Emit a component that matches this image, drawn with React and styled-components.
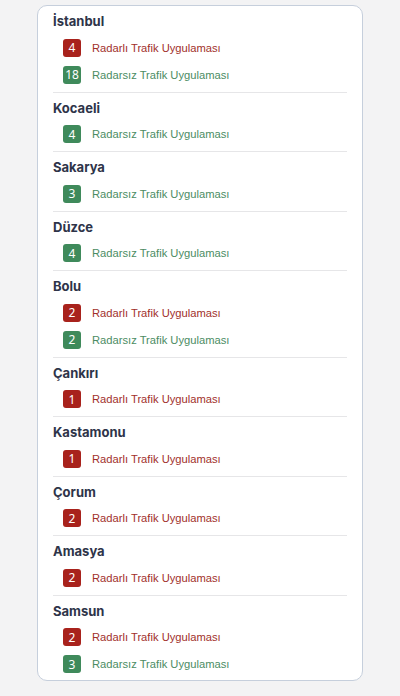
import styled, { createGlobalStyle } from "styled-components";

const cities = [
  { name: "İstanbul", items: [{ type: "radar", count: 4 }, { type: "free", count: 18 }] },
  { name: "Kocaeli", items: [{ type: "free", count: 4 }] },
  { name: "Sakarya", items: [{ type: "free", count: 3 }] },
  { name: "Düzce", items: [{ type: "free", count: 4 }] },
  { name: "Bolu", items: [{ type: "radar", count: 2 }, { type: "free", count: 2 }] },
  { name: "Çankırı", items: [{ type: "radar", count: 1 }] },
  { name: "Kastamonu", items: [{ type: "radar", count: 1 }] },
  { name: "Çorum", items: [{ type: "radar", count: 2 }] },
  { name: "Amasya", items: [{ type: "radar", count: 2 }] },
  { name: "Samsun", items: [{ type: "radar", count: 2 }, { type: "free", count: 3 }] },
];

const labels = {
  radar: "Radarlı Trafik Uygulaması",
  free: "Radarsız Trafik Uygulaması",
};

const palette = {
  radar: { badge: "#a8221c", text: "#a1302b" },
  free: { badge: "#3f8a5b", text: "#4b8c63" },
};

const GlobalStyle = createGlobalStyle`
  body {
    margin: 0;
    background: #f3f3f4;
    font-family: "Liberation Sans", Arial, sans-serif;
  }
`;

const Page = styled.div`
  padding: 5px 37px 14px 37px;
`;

const Card = styled.div`
  background: #fff;
  border: 1px solid #c6cfdc;
  border-radius: 10px;
  padding: 0 15px;
`;

const Section = styled.div`
  padding: 5px 0 3.5px 0;
  border-bottom: 1px solid #e6e6e8;

  &:last-child {
    border-bottom: none;
    padding-bottom: 2px;
  }
`;

const CityName = styled.div`
  font-family: Inter, "Noto Sans", sans-serif;
  font-weight: 700;
  font-size: 13px;
  line-height: 20px;
  color: #2e3449;
  margin-bottom: 3px;
`;

const Row = styled.div`
  display: flex;
  align-items: center;
  height: 27px;
  padding-left: 10px;
`;

const Badge = styled.span`
  display: flex;
  align-items: center;
  justify-content: center;
  width: 18px;
  height: 18px;
  border-radius: 3px;
  background: ${p => palette[p.$type].badge};
  color: #fff;
  font-family: "Noto Sans", "Open Sans", sans-serif;
  font-size: 12px;
  margin-right: 11px;
`;

const Label = styled.span`
  font-size: 11.2px;
  color: ${p => palette[p.$type].text};
`;

export default function App() {
  return (
    <>
      <GlobalStyle />
      <Page>
        <Card>
          {cities.map(city => (
            <Section key={city.name}>
              <CityName>{city.name}</CityName>
              {city.items.map(item => (
                <Row key={item.type}>
                  <Badge $type={item.type}>{item.count}</Badge>
                  <Label $type={item.type}>{labels[item.type]}</Label>
                </Row>
              ))}
            </Section>
          ))}
        </Card>
      </Page>
    </>
  );
}
